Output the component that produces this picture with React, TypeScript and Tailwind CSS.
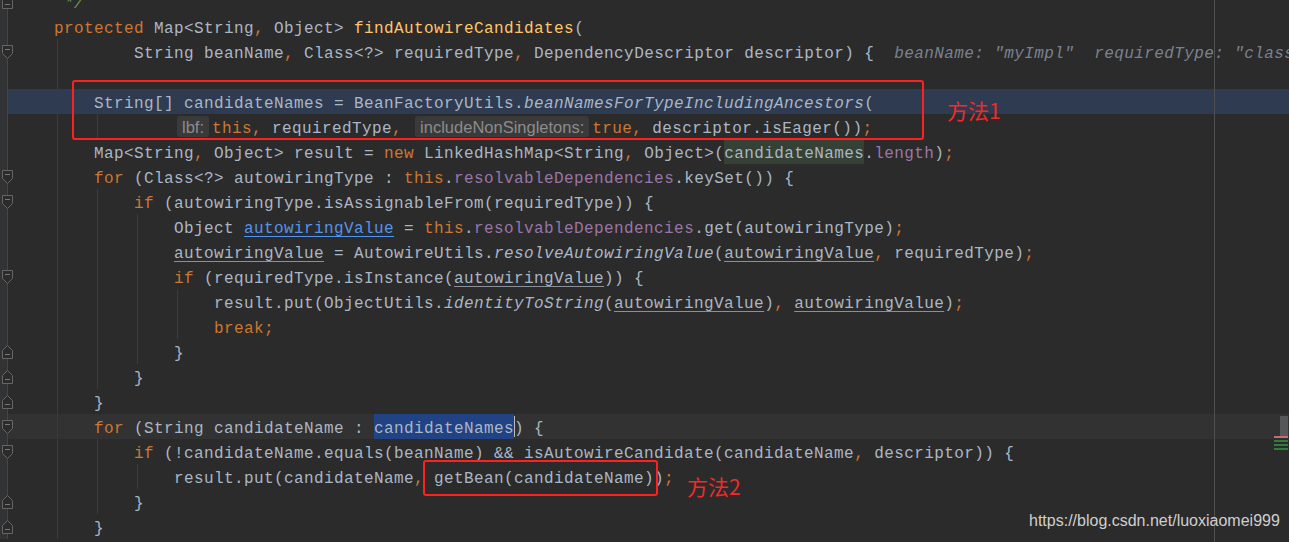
import React from 'react';

const D = '#a9b7c6';
const K = '#cc7832';
const F = '#ffc66d';
const P = '#9876aa';
const C = '#629755';
const H = '#7a8290';

type Tok = {
  t?: string;
  c?: string;
  i?: boolean;
  u?: 'gray' | 'blue';
  bg?: string;
  hint?: string;
  caret?: boolean;
};

type Row = {
  ind: number;
  g: number;
  fold?: 'start' | 'end';
  bg?: string;
  toks: Tok[];
};

const d = (t: string): Tok => ({ t, c: D });
const k = (t: string): Tok => ({ t, c: K });
const it = (t: string): Tok => ({ t, c: D, i: true });
const ul = (t: string): Tok => ({ t, c: D, u: 'gray' });
const f = (t: string): Tok => ({ t, c: P });

const rows: Row[] = [
  { ind: 0, g: 0, fold: 'end', toks: [{ t: ' */', c: C, i: true }] },
  { ind: 0, g: 0, toks: [k('protected'), d(' Map<String'), k(','), d(' Object> '), { t: 'findAutowireCandidates', c: F }, d('(')] },
  {
    ind: 2,
    g: 1,
    fold: 'start',
    toks: [
      d('String beanName'), k(','), d(' Class<?> requiredType'), k(','), d(' DependencyDescriptor descriptor) {'),
      { t: '  beanName: "myImpl"  requiredType: "class org.springframework', c: H, i: true },
    ],
  },
  { ind: 1, g: 1, toks: [] },
  {
    ind: 1,
    g: 1,
    bg: 'bg-[#2e3b50]',
    toks: [d('String[] candidateNames = BeanFactoryUtils.'), it('beanNamesForTypeIncludingAncestors'), d('(')],
  },
  {
    ind: 3,
    g: 2,
    toks: [
      { hint: 'lbf:' }, k('this'), k(','), d(' requiredType'), k(','), d(' '),
      { hint: 'includeNonSingletons:' }, k('true'), k(','), d(' descriptor.isEager())'), k(';'),
    ],
  },
  {
    ind: 1,
    g: 1,
    toks: [
      d('Map<String'), k(','), d(' Object> result = '), k('new'), d(' LinkedHashMap<String'), k(','), d(' Object>('),
      { t: 'candidateNames', c: D, bg: 'bg-[#344134]' }, d('.'), f('length'), d(')'), k(';'),
    ],
  },
  { ind: 1, g: 1, fold: 'start', toks: [k('for'), d(' (Class<?> autowiringType : '), k('this'), d('.'), f('resolvableDependencies'), d('.keySet()) {')] },
  { ind: 2, g: 2, fold: 'start', toks: [k('if'), d(' (autowiringType.isAssignableFrom(requiredType)) {')] },
  {
    ind: 3,
    g: 3,
    toks: [d('Object '), { t: 'autowiringValue', c: '#5394ec', u: 'blue' }, d(' = '), k('this'), d('.'), f('resolvableDependencies'), d('.get(autowiringType)'), k(';')],
  },
  {
    ind: 3,
    g: 3,
    toks: [ul('autowiringValue'), d(' = AutowireUtils.'), it('resolveAutowiringValue'), d('('), ul('autowiringValue'), k(','), d(' requiredType)'), k(';')],
  },
  { ind: 3, g: 3, fold: 'start', toks: [k('if'), d(' (requiredType.isInstance('), ul('autowiringValue'), d(')) {')] },
  {
    ind: 4,
    g: 4,
    toks: [d('result.put(ObjectUtils.'), it('identityToString'), d('('), ul('autowiringValue'), d(')'), k(','), d(' '), ul('autowiringValue'), d(')'), k(';')],
  },
  { ind: 4, g: 4, toks: [k('break;')] },
  { ind: 3, g: 3, fold: 'end', toks: [d('}')] },
  { ind: 2, g: 2, fold: 'end', toks: [d('}')] },
  { ind: 1, g: 1, fold: 'end', toks: [d('}')] },
  {
    ind: 1,
    g: 1,
    fold: 'start',
    bg: 'bg-[#323232]',
    toks: [k('for'), d(' (String candidateName : '), { t: 'candidateNames', c: D, bg: 'bg-[#214283]' }, { caret: true }, d(') {')],
  },
  {
    ind: 2,
    g: 2,
    fold: 'start',
    toks: [k('if'), d(' (!candidateName.equals(beanName) && isAutowireCandidate(candidateName'), k(','), d(' descriptor)) {')],
  },
  { ind: 3, g: 3, toks: [d('result.put(candidateName'), k(','), d(' getBean(candidateName))'), k(';')] },
  { ind: 2, g: 2, fold: 'end', toks: [d('}')] },
  { ind: 1, g: 1, fold: 'end', toks: [d('}')] },
];

const stripeMarks = ['bg-[#c36b7c]', 'bg-[#2f7d38]', 'bg-[#2f7d38]', 'bg-[#2f7d38]'];

function Gutter({ fold }: { fold?: 'start' | 'end' }) {
  return (
    <svg width="54" height="25" className="block shrink-0">
      <rect x="0" y="0" width="7" height="25" fill="#313335" />
      <line x1="7.5" y1="0" x2="7.5" y2="25" stroke="#454545" />
      {fold === 'start' && (
        <>
          <path d="M2.5 6.5 H12.5 V14.5 L7.5 19.5 L2.5 14.5 Z" fill="#2b2b2b" stroke="#666" />
          <path d="M5 10.5 H10" stroke="#777" />
        </>
      )}
      {fold === 'end' && (
        <>
          <path d="M7.5 6.5 L12.5 11.5 V19.5 H2.5 V11.5 Z" fill="#2b2b2b" stroke="#666" />
          <path d="M5 15.5 H10" stroke="#777" />
        </>
      )}
    </svg>
  );
}

function Token({ tok }: { tok: Tok }) {
  if (tok.hint) {
    return (
      <span className="mx-[3px] flex h-[21px] items-center self-center rounded-[3px] bg-[#3a3a3a] px-[5px] font-['Liberation_Sans',sans-serif] text-[16.5px] leading-[18px] tracking-normal text-[#8c8c8c]">
        {tok.hint}
      </span>
    );
  }
  if (tok.caret) {
    return <span className="-mr-px h-[21px] w-px self-center bg-[#bbbbbb]" />;
  }
  const deco =
    tok.u === 'blue'
      ? 'underline decoration-[#5394ec] decoration-1 underline-offset-[3px]'
      : tok.u === 'gray'
        ? 'underline decoration-[#8a9099] decoration-1 underline-offset-[3px]'
        : '';
  return (
    <span
      className={`h-[25px] whitespace-pre pt-[6px] leading-[19px] ${tok.i ? 'italic' : ''} ${deco} ${tok.bg ?? ''}`}
      style={{ color: tok.c }}
    >
      {tok.t}
    </span>
  );
}

export default function App() {
  return (
    <div className="relative h-[542px] w-[1289px] overflow-hidden bg-[#2b2b2b] font-['Liberation_Mono',monospace] text-[16px] tracking-[0.4px]">
      {/* Code lines */}
      <div className="-mt-[11px] flex flex-col">
        {rows.map((row, idx) => (
          <div key={idx} className={`flex h-[25px] w-full ${row.bg ?? ''}`}>
            <Gutter fold={row.fold} />
            {Array.from({ length: row.ind }).map((_, lv) => (
              <div key={lv} className="h-full w-[40px] shrink-0">
                {lv < row.g && <div className="ml-[3px] h-full w-px bg-[#3b3b3b]" />}
              </div>
            ))}
            <div className="flex h-full shrink-0">
              {row.toks.map((tok, ti) => (
                <Token key={ti} tok={tok} />
              ))}
            </div>
          </div>
        ))}
      </div>

      {/* Right margin guide */}
      <div className="absolute left-[1214px] top-0 h-full w-px bg-[#505050]" />

      {/* Scrollbar thumb + error stripe marks */}
      <div className="absolute left-[1274px] top-[416px] flex w-[14px] flex-col items-end">
        <div className="h-[20px] w-[8px] bg-[#555759]" />
        <div className="flex w-full flex-col gap-[2px]">
          {stripeMarks.map((m, i) => (
            <div key={i} className={`h-[2px] w-full ${m}`} />
          ))}
        </div>
      </div>

      {/* Annotation 1 */}
      <div className="absolute left-[72px] top-[80px] flex items-center gap-[23px]">
        <div className="h-[60px] w-[852px] rounded-[3px] border-2 border-[#ff2020]" />
        <span className="font-['Noto_Sans_CJK_SC',sans-serif] text-[21px] leading-[28px] tracking-normal text-[#f22a2a]">方法1</span>
      </div>

      {/* Annotation 2 */}
      <div className="absolute left-[423px] top-[460px] flex items-start gap-[29px]">
        <div className="h-[36px] w-[235px] rounded-[3px] border-2 border-[#ff2020]" />
        <span className="mt-[12px] font-['Noto_Sans_CJK_SC',sans-serif] text-[21px] leading-[28px] tracking-normal text-[#f22a2a]">方法2</span>
      </div>

      {/* Watermark */}
      <div className="absolute left-[1029px] top-[511px] font-['Liberation_Sans',sans-serif] text-[16px] leading-[20px] tracking-normal text-[#cfcfcf]">
        https://blog.csdn.net/luoxiaomei999
      </div>
    </div>
  );
}
